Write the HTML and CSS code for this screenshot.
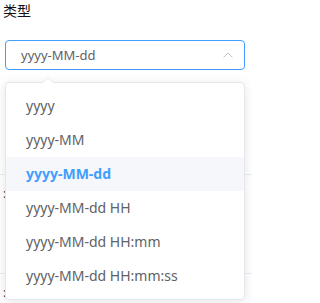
FILE: index.html
```html
<!DOCTYPE html>
<html lang="zh">
<head>
<meta charset="utf-8">
<link rel="stylesheet" href="styles.css">
</head>
<body>
<div class="page">
  <div class="label">类型</div>
  <div class="select">
    <div class="input">
      <span class="value">yyyy-MM-dd</span>
      <svg class="chev" width="10" height="6" viewBox="0 0 10 6"><polyline points="0.5,5.5 5,1 9.5,5.5" fill="none" stroke="#c0c4cc" stroke-width="1"/></svg>
    </div>
    <div class="dropdown">
      <div class="arrow"></div>
      <ul class="options">
        <li class="opt">yyyy</li>
        <li class="opt">yyyy-MM</li>
        <li class="opt selected">yyyy-MM-dd</li>
        <li class="opt">yyyy-MM-dd HH</li>
        <li class="opt">yyyy-MM-dd HH:mm</li>
        <li class="opt">yyyy-MM-dd HH:mm:ss</li>
      </ul>
    </div>
  </div>
  <div class="bg">
    <div class="row"><span class="colon">:</span></div>
    <div class="row last"><span class="colon">:</span></div>
  </div>
</div>
</body>
</html>
```
FILE: styles.css
```css
html, body {
  margin: 0;
  padding: 0;
  background: #fff;
}
body {
  font-family: "Noto Sans", "Noto Sans CJK SC", sans-serif;
  width: 252px;
  height: 303px;
  overflow: hidden;
}
.page {
  padding: 1px 0 0 0;
}
.label {
  margin-left: 3px;
  font-family: "Noto Sans CJK SC", sans-serif;
  font-size: 14px;
  line-height: 18px;
  color: #111;
  height: 18px;
}
.select {
  position: relative;
  margin: 21px 8px 0 5px;
  width: 240px;
}
.input {
  box-sizing: border-box;
  height: 30px;
  border: 1px solid #409eff;
  border-radius: 4px;
  display: flex;
  align-items: center;
  justify-content: space-between;
  padding: 0 11px 0 15px;
}
.value {
  font-size: 13px;
  color: #606266;
  line-height: 28px;
}
.chev {
  display: block;
  margin-top: -1px;
}
.dropdown {
  position: absolute;
  left: 0;
  top: 42px;
  width: 240px;
  box-sizing: border-box;
  background: #fff;
  border: 1px solid #e4e7ed;
  border-radius: 4px;
  box-shadow: 0 2px 12px 0 rgba(0, 0, 0, 0.1);
  z-index: 2;
}
.arrow {
  position: absolute;
  top: -6px;
  left: 36px;
  width: 0;
  height: 0;
  border-left: 6px solid transparent;
  border-right: 6px solid transparent;
  border-bottom: 6px solid #e4e7ed;
}
.arrow::after {
  content: "";
  position: absolute;
  left: -5px;
  top: 1px;
  border-left: 5px solid transparent;
  border-right: 5px solid transparent;
  border-bottom: 5px solid #fff;
}
.options {
  list-style: none;
  margin: 0;
  padding: 6px 0;
}
.opt {
  height: 34px;
  line-height: 34px;
  padding: 0 20px;
  font-size: 14px;
  color: #606266;
  white-space: nowrap;
}
.opt.selected {
  background: #f5f7fa;
  color: #409eff;
  font-weight: 700;
}
.bg {
  margin-top: 104px;
}
.row {
  border-top: 1px solid #ebeef5;
  height: 98px;
  padding-left: 3px;
}
.row.last {
  height: 29px;
}
.colon {
  display: block;
  font-size: 13px;
  line-height: 14px;
  margin-top: 11px;
  color: #333;
}
```
